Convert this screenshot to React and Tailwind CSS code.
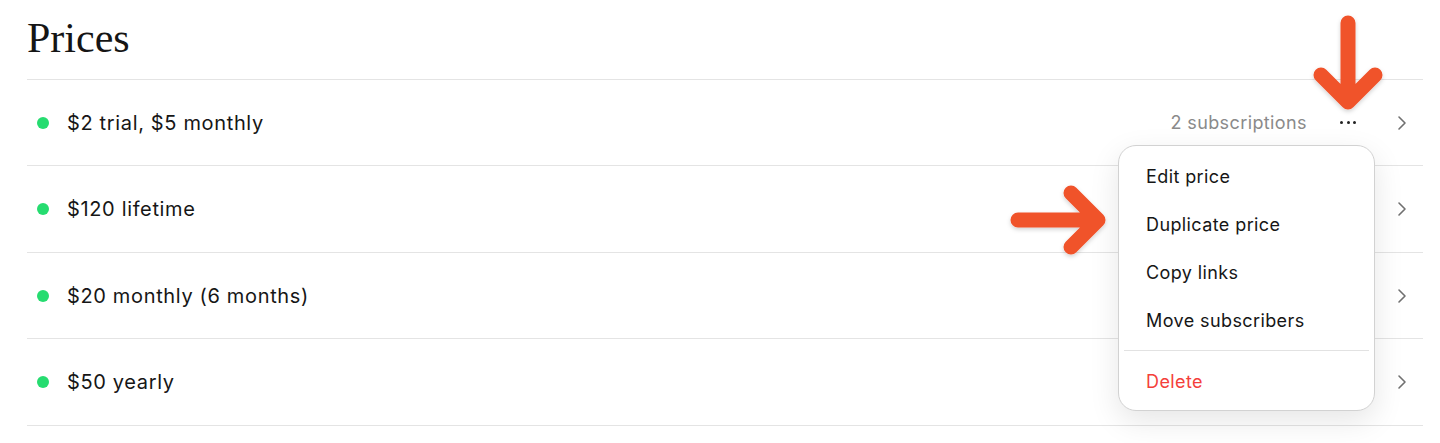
import React from "react";

const rows = [
  { label: "$2 trial, $5 monthly", h: "h-[86px]", subs: "2 subscriptions" },
  { label: "$120 lifetime", h: "h-[87px]" },
  { label: "$20 monthly (6 months)", h: "h-[86px]" },
  { label: "$50 yearly", h: "h-[87px]" },
];

function Chevron() {
  return (
    <svg width="10" height="16" viewBox="0 0 10 16" className="mr-[16px] shrink-0">
      <path d="M2 2 L8 8 L2 14" fill="none" stroke="#707070" strokeWidth="1.6" strokeLinecap="round" strokeLinejoin="round" />
    </svg>
  );
}

function Dots() {
  return (
    <div className="flex items-center gap-[3.5px] mr-[41px]">
      <span className="w-[3px] h-[3px] rounded-full bg-[#222]" />
      <span className="w-[3px] h-[3px] rounded-full bg-[#222]" />
      <span className="w-[3px] h-[3px] rounded-full bg-[#222]" />
    </div>
  );
}

export default function App() {
  const sans = { fontFamily: "Inter, 'Noto Sans', sans-serif" };
  return (
    <div className="relative w-[1440px] h-[443px] bg-white overflow-hidden" style={sans}>
      <div className="pl-[27px] pr-[17px]">
        <div className="pt-[17px] pb-[20px] border-b border-[#e4e4e4]">
          <h1 className="text-[42px] leading-[42px] text-[#151515]" style={{ fontFamily: "'Liberation Serif', 'DejaVu Serif', serif" }}>
            Prices
          </h1>
        </div>
        {rows.map((r) => (
          <div key={r.label} className={`${r.h} flex items-center border-b border-[#e4e4e4]`}>
            <span className="ml-[10px] w-[12px] h-[12px] rounded-full bg-[#26dc70] shrink-0" />
            <span className="ml-[18px] text-[20px] text-[#161616] tracking-[0.65px]">{r.label}</span>
            <div className="flex-1" />
            {r.subs ? (
              <>
                <span className="text-[18px] text-[#8a8a8a] tracking-[0.4px] mr-[33px]">{r.subs}</span>
                <Dots />
              </>
            ) : null}
            <Chevron />
          </div>
        ))}
      </div>

      <div className="absolute left-[1118px] top-[145px] w-[257px] rounded-[18px] border border-[#d2d2d2] bg-white shadow-[0_10px_30px_rgba(0,0,0,0.10)] pt-[6px] pb-[5px]">
        {["Edit price", "Duplicate price", "Copy links", "Move subscribers"].map((t) => (
          <div key={t} className="h-[48px] flex items-center pl-[27px] text-[18px] tracking-[0.4px] text-[#161616]">
            {t}
          </div>
        ))}
        <div className="mx-[5px] my-[6px] h-px bg-[#e2e2e2]" />
        <div className="h-[48px] flex items-center pl-[27px] text-[18px] tracking-[0.4px] text-[#f4403a]">Delete</div>
      </div>

      <svg className="absolute inset-0 pointer-events-none" width="1440" height="443" viewBox="0 0 1440 443">
        <defs>
          <filter id="sh" x="-20%" y="-20%" width="140%" height="140%">
            <feDropShadow dx="0" dy="2" stdDeviation="2" floodColor="#000" floodOpacity="0.18" />
          </filter>
        </defs>
        <g fill="none" stroke="#f0522a" strokeWidth="15" strokeLinecap="round" strokeLinejoin="round" filter="url(#sh)">
          <path d="M1348 23 L1348 100 M1321 75 L1348 102 L1375 75" />
          <path d="M1018 220 L1096 220 M1071 193 L1098 220 L1071 247" />
        </g>
      </svg>
    </div>
  );
}
